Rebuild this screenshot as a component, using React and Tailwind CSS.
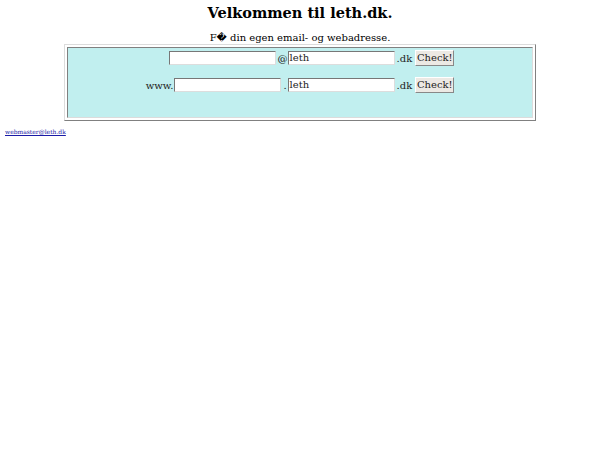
const Field = ({ value }) => (
  <span className="w-[107px] h-[14px] bg-white border border-t-[#777] border-l-[#777] border-r-[#ddd] border-b-[#ddd] text-[10px] leading-[12px] pl-[1px] text-[#222]">
    {value}
  </span>
);

const CheckButton = () => (
  <span className="ml-[3px] w-[39px] h-[16px] text-center text-[10px] leading-[14px] bg-[#ece9e4] border border-t-[#fff] border-l-[#fff] border-r-[#888] border-b-[#888]">
    Check!
  </span>
);

export default function App() {
  return (
    <div className="w-[600px] h-[450px] bg-white text-black font-['DejaVu_Serif',serif]">
      <div className="pt-[4px] text-center">
        <h1 className="text-[14.5px] font-bold leading-[18px]">Velkommen til leth.dk.</h1>
        <p className="mt-[10px] text-[10px] leading-[12px]">F� din egen email- og webadresse.</p>
      </div>
      <div className="mx-[64px] border border-t-[#dcdcdc] border-l-[#dcdcdc] border-r-[#808080] border-b-[#808080] p-[2px]">
        <div className="h-[71px] border border-t-[#808080] border-l-[#808080] border-r-[#dcdcdc] border-b-[#dcdcdc] bg-[#c1efef] text-[10px] text-[#222]">
          <div className="grid grid-cols-[auto_auto] justify-center gap-y-[11px] pt-[2px]">
            <div className="flex items-center justify-end h-[16px]">
              <Field value="" />
              <span className="pl-[2px]">@</span>
            </div>
            <div className="flex items-center h-[16px]">
              <Field value="leth" />
              <span className="pl-[2px]">.dk</span>
              <CheckButton />
            </div>
            <div className="flex items-center justify-end h-[16px]">
              <span className="pr-[1px]">www.</span>
              <Field value="" />
              <span className="pl-[2px] pr-[1px]">.</span>
            </div>
            <div className="flex items-center h-[16px]">
              <Field value="leth" />
              <span className="pl-[2px]">.dk</span>
              <CheckButton />
            </div>
          </div>
        </div>
      </div>
      <div className="pl-[5px] mt-[7px] text-[6px] leading-[8px]">
        <a href="#" className="text-[#1a1aa6] underline">webmaster@leth.dk</a>
      </div>
    </div>
  );
}
